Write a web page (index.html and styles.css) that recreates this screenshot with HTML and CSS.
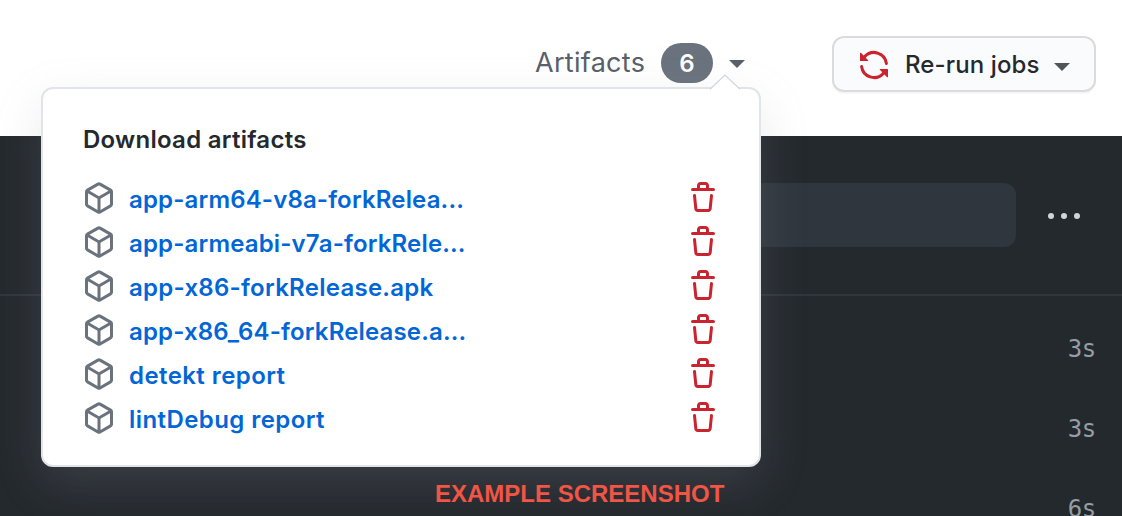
FILE: index.html
```html
<!DOCTYPE html>
<html lang="en">
<head>
<meta charset="utf-8">
<title>Artifacts</title>
<link rel="stylesheet" href="styles.css">
</head>
<body>
<svg class="defs" aria-hidden="true">
  <symbol id="package" viewBox="0 0 16 16"><path fill-rule="evenodd" d="M8.878.392a1.75 1.75 0 00-1.756 0l-5.25 3.045A1.75 1.75 0 001 4.951v6.098c0 .624.332 1.2.872 1.514l5.25 3.045a1.75 1.75 0 001.756 0l5.25-3.045c.54-.313.872-.89.872-1.514V4.951c0-.624-.332-1.2-.872-1.514L8.878.392zM7.875 1.69a.25.25 0 01.25 0l4.63 2.685L8 7.133 3.245 4.375l4.63-2.685zM2.5 5.677v5.372c0 .09.047.171.125.216l4.625 2.683V8.432L2.5 5.677zm6.25 8.271l4.625-2.683a.25.25 0 00.125-.216V5.677L8.75 8.432v5.516z"/></symbol>
  <symbol id="trash" viewBox="0 0 16 16"><path fill-rule="evenodd" d="M6.5 1.75a.25.25 0 01.25-.25h2.5a.25.25 0 01.25.25V3h-3V1.75zm4.5 0V3h2.25a.75.75 0 010 1.5H2.75a.75.75 0 010-1.5H5V1.75C5 .784 5.784 0 6.75 0h2.5C10.216 0 11 .784 11 1.75zM4.496 6.675a.75.75 0 10-1.492.15l.66 6.6A1.75 1.75 0 005.405 15h5.19c.9 0 1.652-.681 1.741-1.576l.66-6.6a.75.75 0 00-1.492-.149l-.66 6.6a.25.25 0 01-.249.225h-5.19a.25.25 0 01-.249-.225l-.66-6.6z"/></symbol>
</svg>
<div class="page">
  <header class="header">
    <div class="artifacts">
      <span class="artifacts-label">Artifacts</span>
      <span class="counter">6</span>
      <span class="caret"></span>
    </div>
    <div class="rerun">
      <svg class="icon sync" viewBox="0 0 16 16"><path fill-rule="evenodd" d="M8 2.5a5.487 5.487 0 00-4.131 1.869l1.204 1.204A.25.25 0 014.896 6H1.25A.25.25 0 011 5.75V2.104a.25.25 0 01.427-.177l1.38 1.38A7.001 7.001 0 0114.95 7.16a.75.75 0 11-1.49.178A5.501 5.501 0 008 2.5zM1.705 8.005a.75.75 0 01.834.656 5.501 5.501 0 009.592 2.97l-1.204-1.204a.25.25 0 01.177-.427h3.646a.25.25 0 01.25.25v3.646a.25.25 0 01-.427.177l-1.38-1.38A7.001 7.001 0 011.05 8.84a.75.75 0 01.656-.834z"/></svg>
      <span class="rerun-label">Re-run jobs</span>
      <span class="caret"></span>
    </div>
  </header>
  <main class="log">
    <div class="toolbar">
      <div class="search"></div>
      <div class="dots"><i></i><i></i><i></i></div>
    </div>
    <div class="steps">
      <div class="step">3s</div>
      <div class="step">3s</div>
      <div class="step">6s</div>
    </div>
  </main>
  <section class="menu">
    <svg class="notch" viewBox="0 0 32 16"><path d="M0 16L16 1L32 16Z" fill="#fff"/><path d="M1 15.2L16 1L31 15.2" fill="none" stroke="#d3d6d9" stroke-width="1.2"/></svg>
    <h2 class="title">Download artifacts</h2>
    <ul class="list">
      <li class="item"><svg class="icon box"><use href="#package"/></svg><a class="name long">app-arm64-v8a-forkRelea...</a><svg class="icon trash"><use href="#trash"/></svg></li>
      <li class="item"><svg class="icon box"><use href="#package"/></svg><a class="name long">app-armeabi-v7a-forkRele...</a><svg class="icon trash"><use href="#trash"/></svg></li>
      <li class="item"><svg class="icon box"><use href="#package"/></svg><a class="name">app-x86-forkRelease.apk</a><svg class="icon trash"><use href="#trash"/></svg></li>
      <li class="item"><svg class="icon box"><use href="#package"/></svg><a class="name long">app-x86_64-forkRelease.a...</a><svg class="icon trash"><use href="#trash"/></svg></li>
      <li class="item"><svg class="icon box"><use href="#package"/></svg><a class="name short">detekt report</a><svg class="icon trash"><use href="#trash"/></svg></li>
      <li class="item"><svg class="icon box"><use href="#package"/></svg><a class="name short">lintDebug report</a><svg class="icon trash"><use href="#trash"/></svg></li>
    </ul>
  </section>
  <div class="caption">EXAMPLE SCREENSHOT</div>
</div>
</body>
</html>
```
FILE: styles.css
```css
* { box-sizing: border-box; }
body {
  margin: 0;
  font-family: Inter, "Liberation Sans", sans-serif;
  font-size: 24px;
  color: #24292e;
}
.defs { position: absolute; width: 0; height: 0; }
.page {
  position: relative;
  width: 1122px;
  height: 516px;
  overflow: hidden;
  display: flex;
  flex-direction: column;
  background: #24292e;
}
.header {
  height: 136px;
  flex: none;
  display: flex;
  justify-content: flex-end;
  align-items: flex-start;
  padding: 36px 26px 0 0;
  background: #fff;
}
.artifacts {
  display: flex;
  align-items: center;
  height: 54px;
  margin-right: 87px;
  color: #586069;
}
.artifacts-label {
  width: 126px;
  line-height: 30px;
  font-size: 27px;
  letter-spacing: .3px;
  padding-bottom: 1px;
  white-space: nowrap;
}
.counter {
  width: 52px;
  height: 40px;
  border-radius: 20px;
  background: #6a737d;
  color: #fff;
  font-weight: 600;
  line-height: 41px;
  text-align: center;
}
.caret {
  border: 8px solid transparent;
  border-top-color: currentColor;
  border-bottom: 0;
}
.artifacts .caret { margin: 1px 0 0 16px; }
.rerun {
  width: 264px;
  height: 56px;
  display: flex;
  align-items: center;
  padding-left: 24px;
  border: 2px solid #d9dbde;
  border-radius: 12px;
  background: #fafbfc;
  box-shadow: 0 2px 0 rgba(27, 31, 35, .04);
}
.icon { width: 32px; height: 32px; flex: none; fill: currentColor; }
.sync { color: #cb2431; margin-top: 2px; }
.rerun-label {
  width: 134px;
  margin-left: 15px;
  font-weight: 500;
  letter-spacing: .12px;
  padding-top: 1px;
  white-space: nowrap;
}
.rerun .caret { margin: 5px 0 0 15px; color: #50555a; }
.log { flex: 1; }
.toolbar {
  height: 160px;
  display: flex;
  justify-content: flex-end;
  padding: 47px 42px 0 0;
  border-bottom: 2px solid #2f363d;
}
.search {
  width: 400px;
  height: 64px;
  border-radius: 12px;
  background: #2f363d;
}
.dots { display: flex; gap: 7px; margin: 30px 0 0 32px; }
.dots i { width: 6px; height: 6px; border-radius: 50%; background: #d1d5da; }
.steps { padding: 13px 26px 0 0; }
.step {
  height: 80px;
  line-height: 80px;
  text-align: right;
  font-family: "DejaVu Sans Mono", monospace;
  font-size: 24px;
  letter-spacing: -.3px;
  color: #959da5;
}
.menu {
  position: absolute;
  left: 41px;
  top: 87px;
  width: 720px;
  height: 380px;
  padding: 33px 40px;
  border: 2px solid #e1e4e8;
  border-radius: 12px;
  background: #fff;
  box-shadow: 0 16px 48px rgba(149, 157, 165, .2);
}
.notch { position: absolute; left: 666px; top: -15px; width: 32px; height: 16px; }
.title {
  margin: 0 0 22px;
  font-size: 24px;
  font-weight: 600;
  line-height: 36px;
  letter-spacing: .26px;
  white-space: nowrap;
}
.list { margin: 0; padding: 0; list-style: none; }
.item { display: flex; align-items: center; height: 44px; }
.box { color: #6a737d; margin-top: -8px; }
.name {
  flex: 1;
  margin: -6px 0 0 14px;
  color: #0366d6;
  font-weight: 600;
  letter-spacing: .27px;
  white-space: nowrap;
}
.long { letter-spacing: .16px; }
.short { letter-spacing: .42px; }
.trash { color: #cb2431; margin: -8px 0 0; }
.caption {
  position: absolute;
  left: 435px;
  top: 480px;
  font: bold 24px/28px "Liberation Sans", Arial, sans-serif;
  color: #f05545;
  white-space: nowrap;
}
```
